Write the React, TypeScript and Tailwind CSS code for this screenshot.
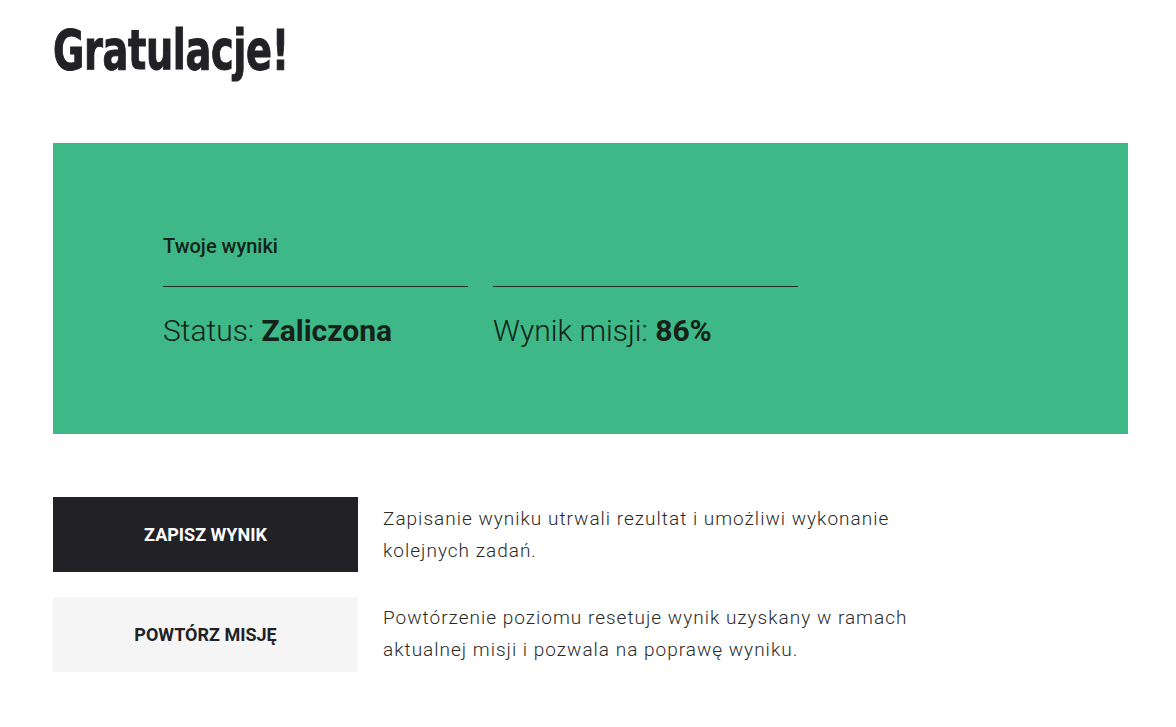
export default function App() {
  return (
    <div className="min-h-screen bg-white pl-[53px] pr-[48px] pt-[16px] font-['Roboto',sans-serif] text-[#222226]">
      {/* Page title */}
      <h1 className="origin-left scale-x-[0.76] font-['Liberation_Sans_Narrow','DejaVu_Sans_Condensed',sans-serif] text-[56px] font-bold leading-[68px] tracking-[-0.5px] [-webkit-text-stroke:1px_#222226]">
        Gratulacje!
      </h1>

      {/* Results panel */}
      <section className="mt-[59px] h-[291px] bg-[#3db886] pl-[110px] pt-[92px] text-[#142219]">
        <h2 className="text-[20px] font-medium leading-[22px]">Twoje wyniki</h2>
        <div className="mt-[29px] flex gap-[25px]">
          <div className="w-[305px] border-t border-[#1d2d24] pt-[26px] text-[30px] font-light leading-[36px]">
            Status: <span className="font-bold">Zaliczona</span>
          </div>
          <div className="w-[305px] border-t border-[#1d2d24] pt-[26px] text-[30px] font-light leading-[36px]">
            Wynik misji: <span className="font-bold">86%</span>
          </div>
        </div>
      </section>

      {/* Actions */}
      <div className="mt-[63px] flex flex-col gap-[25px]">
        <div className="flex gap-[25px]">
          <button className="flex h-[75px] w-[305px] shrink-0 items-center justify-center bg-[#222226] text-[18px] font-bold uppercase text-white">
            Zapisz wynik
          </button>
          <p className="mt-[6px] w-[560px] text-[19px] font-light leading-[32px] tracking-[0.053em] text-[#2a2a2a]">
            Zapisanie wyniku utrwali rezultat i umożliwi wykonanie kolejnych zadań.
          </p>
        </div>
        <div className="flex gap-[25px]">
          <button className="flex h-[75px] w-[305px] shrink-0 items-center justify-center bg-[#f5f5f5] text-[18px] font-bold uppercase text-[#222226]">
            Powtórz misję
          </button>
          <p className="mt-[5px] w-[560px] text-[19px] font-light leading-[32px] tracking-[0.053em] text-[#2a2a2a]">
            Powtórzenie poziomu resetuje wynik uzyskany w ramach aktualnej misji i pozwala na poprawę wyniku.
          </p>
        </div>
      </div>
    </div>
  );
}
